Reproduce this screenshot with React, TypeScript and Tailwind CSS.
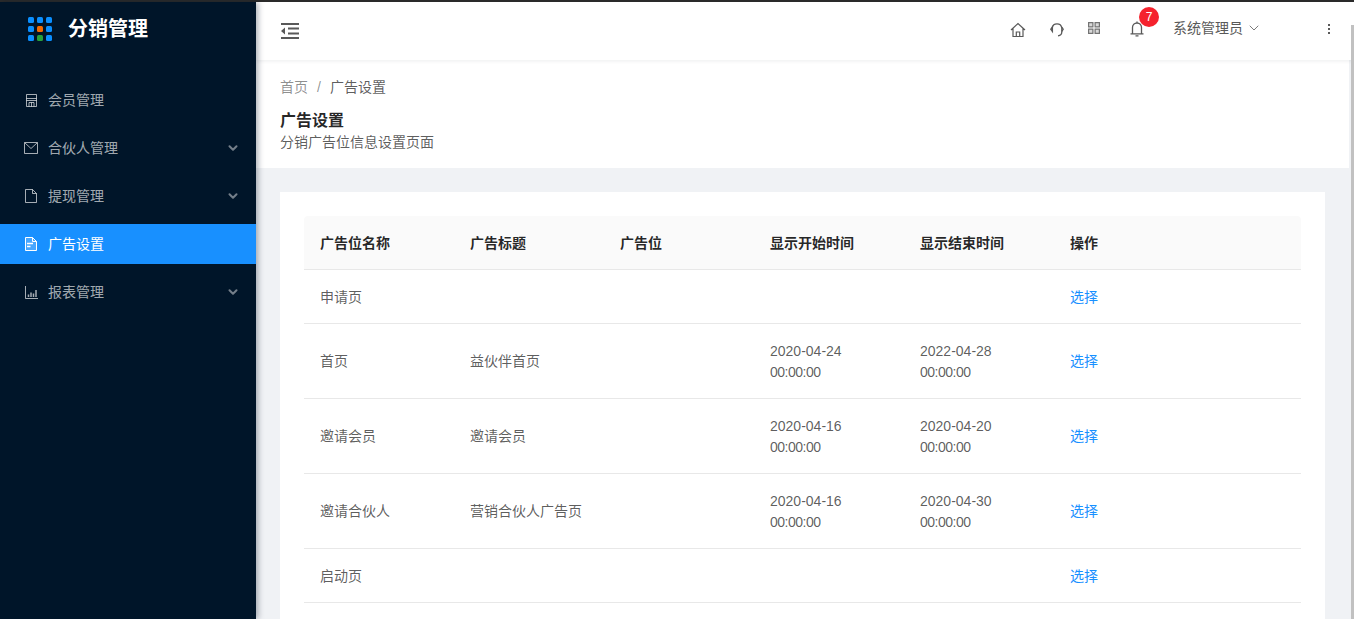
import React from "react";
import { ChevronDown } from "lucide-react";

const FONT = "font-['Liberation_Sans','Noto_Sans_CJK_SC',sans-serif]";

const LogoDots = () => {
	const colors = ["#0a8fff", "#0a8fff", "#0a8fff", "#0a8fff", "#f56a00", "#0a8fff", "#0a8fff", "#27a13a", "#0a8fff"];
	return (
		<div className="grid grid-cols-[6px_6px_6px] gap-[3px] w-[24px]">
			{colors.map((c, i) => (
				<span key={i} className="w-[6px] h-[6px] rounded-[1.5px]" style={{ backgroundColor: c }} />
			))}
		</div>
	);
};

const ShopIcon = () => (
	<svg width="13" height="13" viewBox="0 0 13 13" fill="none" stroke="currentColor" strokeWidth="1">
		<path d="M1.500.5h10v12h-10zM1.500 4.500h10M1.500 6.500h10M4 12.500V8.500h5v4M6.500 8.500v4" />
	</svg>
);
const MailIcon = () => (
	<svg width="14" height="12" viewBox="0 0 14 12" fill="none" stroke="currentColor" strokeWidth="1">
		<path d="M.5.5h13v11H.5zM.8.800 7 6.500 13.200.8" />
	</svg>
);
const FileIcon = () => (
	<svg width="12" height="14" viewBox="0 0 12 14" fill="none" stroke="currentColor" strokeWidth="1">
		<path d="M.5.5h7l4 4v9H.5zM7.500.5v4h4" />
	</svg>
);
const FileTextIcon = () => (
	<svg width="12" height="14" viewBox="0 0 12 14" stroke="currentColor" strokeWidth="1" fill="none">
		<path d="M.5.5h7l4 4v9H.5z" fill="#ffffff33" />
		<path d="M7.500.5v4h4" />
		<path d="M2 6.500h6M2 9.500h3.500" strokeWidth="1.500" />
	</svg>
);
const ChartIcon = () => (
	<svg width="13" height="13" viewBox="0 0 13 13" fill="none" stroke="currentColor" strokeWidth="1">
		<path d="M.5 0v12.500H13" />
		<path d="M3.500 11V8.500M6 11V6.500M8.500 11V7.500M11 11V4" strokeWidth="1.500" />
	</svg>
);

const HomeIcon = () => (
	<svg width="16" height="16" viewBox="0 0 16 16" fill="none" stroke="#595959" strokeWidth="1.200">
		<path d="M1 8 8 1.500 15 8M3 6.500v8h10v-8M6.300 14.500V10h3.400v4.500" />
	</svg>
);
const HeadsetIcon = () => (
	<svg width="14" height="15" viewBox="0 0 14 15" fill="none" stroke="#595959" strokeWidth="1.300">
		<path d="M2.200 5.800A4.900 4.900 0 0 1 11.800 5.800V10c0 2-1.300 3.500-3.800 3.800" />
		<path d="M2.400 5 .8 7.200l1.600 2.300zM11.800 5.200 13.200 7.200 11.800 9.500" />
	</svg>
);
const GridIcon = () => (
	<svg width="12" height="12" viewBox="0 0 12 12" fill="#d9d9d9" stroke="#737373" strokeWidth="1.200">
		<path d="M.6.600h4.300v4.300H.6zM7.100.6h4.300v4.300H7.100zM.6 7.100h4.300v4.300H.6zM7.100 7.100h4.300v4.300H7.100z" />
	</svg>
);
const BellIcon = () => (
	<svg width="14" height="16" viewBox="0 0 14 16" fill="none" stroke="#595959" strokeWidth="1.300">
		<path d="M2.500 12.500V6.500a4.500 4.500 0 0 1 9 0v6M.5 12.800h13M5.500 14.800h3M7 .5v1.500" />
	</svg>
);
const CollapseIcon = () => (
	<svg width="18" height="16" viewBox="0 0 18 16" fill="#595959">
		<path d="M0 0h18v2H0zM7 4.500h11v2H7zM7 9.500h11v2H7zM0 14h18v2H0zM4 4.500v7L0 8z" />
	</svg>
);

const menu = [
	{ label: "会员管理", icon: <ShopIcon /> },
	{ label: "合伙人管理", icon: <MailIcon />, arrow: true },
	{ label: "提现管理", icon: <FileIcon />, arrow: true },
	{ label: "广告设置", icon: <FileTextIcon />, active: true },
	{ label: "报表管理", icon: <ChartIcon />, arrow: true },
];

const rows = [
	{ name: "申请页", title: "", start: "", end: "" },
	{ name: "首页", title: "益伙伴首页", start: "2020-04-24 00:00:00", end: "2022-04-28 00:00:00" },
	{ name: "邀请会员", title: "邀请会员", start: "2020-04-16 00:00:00", end: "2020-04-20 00:00:00" },
	{ name: "邀请合伙人", title: "营销合伙人广告页", start: "2020-04-16 00:00:00", end: "2020-04-30 00:00:00" },
	{ name: "启动页", title: "", start: "", end: "" },
];

const headers = ["广告位名称", "广告标题", "广告位", "显示开始时间", "显示结束时间", "操作"];

const DateCell = ({ value }: { value: string }) => {
	const [date, time] = value.split(" ");
	return (
		<td className="pl-[16px] pt-[2px] leading-[21px]">
			{date && <div>{date}</div>}
			{time && <div className="tracking-[-0.5px]">{time}</div>}
		</td>
	);
};

export default function App() {
	return (
		<div className={`h-[619px] w-full overflow-hidden relative flex flex-col bg-[#f0f2f5] text-[14px] ${FONT}`}>
			<div className="h-[2px] bg-[#2b2b2b] shrink-0" />
			<div className="flex flex-1 min-h-0">
				<aside className="w-[256px] shrink-0 bg-[#001529] shadow-[2px_0_6px_rgba(0,21,41,0.35)] z-10">
					<div className="h-[54px] flex items-center pl-[28px]">
						<LogoDots />
						<span className="ml-[16px] text-[20px] font-bold text-white leading-none">分销管理</span>
					</div>
					<nav className="pt-[24px] flex flex-col gap-[8px]">
						{menu.map((m) => (
							<div
								key={m.label}
								className={`h-[40px] flex items-center pl-[24px] pr-[16px] ${m.active ? "bg-[#1890ff] text-white" : "text-[#ffffffa6]"}`}
							>
								<span className="w-[14px] flex justify-center">{m.icon}</span>
								<span className="ml-[10px] flex-1">{m.label}</span>
								{m.arrow && <ChevronDown size={14} strokeWidth={3.5} className="text-[#ffffff73]" />}
							</div>
						))}
					</nav>
				</aside>
				<div className="flex-1 min-w-0 flex flex-col pr-[5px]">
					<header className="h-[58px] shrink-0 bg-white flex items-center pl-[25px] shadow-[0_1px_4px_rgba(0,21,41,0.08)] -mr-[5px] z-[5]">
						<CollapseIcon />
						<div className="ml-auto flex items-center text-[#595959]">
							<span className="mb-[2px]"><HomeIcon /></span>
							<span className="ml-[24px] mb-[3px]"><HeadsetIcon /></span>
							<span className="ml-[24px] mb-[6px]"><GridIcon /></span>
							<span className="ml-[30px] mb-[4px] relative">
								<BellIcon />
								<span className="absolute -top-[14px] left-[9px] w-[20px] h-[20px] rounded-full bg-[#f5222d] text-white text-[12px] leading-[20px] text-center">7</span>
							</span>
							<span className="ml-[29px] mb-[6px]">系统管理员</span>
							<ChevronDown size={16} strokeWidth={1.200} className="ml-[3px] mb-[6px] text-[#595959]" />
							<span className="ml-[66px] mr-[24px] mb-[4px] flex flex-col gap-[2px]">
								<i className="block w-[2px] h-[2px] bg-[#595959]" />
								<i className="block w-[2px] h-[2px] bg-[#595959]" />
								<i className="block w-[2px] h-[2px] bg-[#595959]" />
							</span>
						</div>
					</header>
					<section className="bg-white h-[108px] shrink-0 px-[24px] pt-[16px]">
						<div className="flex items-center text-[#00000073] leading-[22px]">
							<span>首页</span>
							<span className="mx-[9px]">/</span>
							<span className="text-[#000000a6]">广告设置</span>
						</div>
						<h1 className="mt-[12px] text-[16px] font-bold text-[#000000d9] leading-[22px]">广告设置</h1>
						<p className="-mt-[1px] text-[#000000a6] leading-[22px]">分销广告位信息设置页面</p>
					</section>
					<main className="mt-[24px] mx-[24px] bg-white px-[24px] pt-[24px] flex-1">
						<table className="w-full table-fixed border-collapse">
							<thead>
								<tr className="h-[53px] bg-[#fafafa] border-b border-[#e8e8e8]">
									{headers.map((h, i) => (
										<th key={h} className={`${i === 5 ? "w-auto" : "w-[150px]"} pl-[16px] pt-[2px] text-left font-bold text-[#000000d9] first:rounded-tl-[4px] last:rounded-tr-[4px]`}>{h}</th>
									))}
								</tr>
							</thead>
							<tbody>
								{rows.map((r) => (
									<tr key={r.name} className={`border-b border-[#e8e8e8] text-[#000000a6] ${r.start ? "h-[75px]" : "h-[54px]"}`}>
										<td className="pl-[16px] pt-[2px]">{r.name}</td>
										<td className="pl-[16px] pt-[2px]">{r.title}</td>
										<td className="pl-[16px]" />
										<DateCell value={r.start} />
										<DateCell value={r.end} />
										<td className="pl-[16px] pt-[2px] text-[#1890ff]">选择</td>
									</tr>
								))}
							</tbody>
						</table>
					</main>
				</div>
			</div>
			{/* scrollbar */}
			<div className="absolute right-0 top-[25px] bottom-0 w-[3px] bg-[#c1c1c1] z-20" />
		</div>
	);
}
